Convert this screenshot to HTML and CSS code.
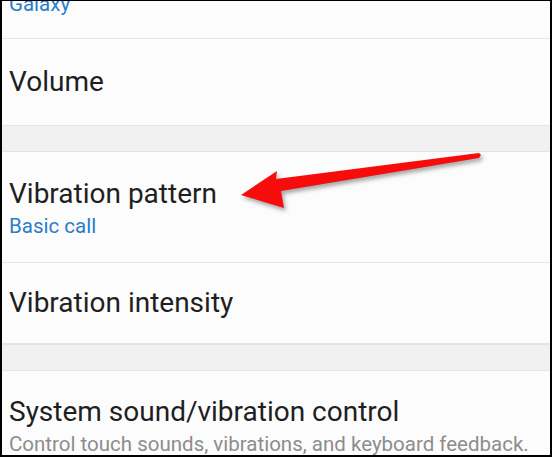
FILE: index.html
```html
<!DOCTYPE html>
<html lang="en">
<head>
<meta charset="utf-8">
<title>Sound settings</title>
<link rel="stylesheet" href="styles.css">
</head>
<body>
<div class="frame">
  <div class="list">
    <div class="item partial">
      <div class="sub blue">Galaxy</div>
    </div>
    <div class="item single tall">
      <div class="title">Volume</div>
    </div>
    <div class="gap"></div>
    <div class="item double">
      <div class="title">Vibration pattern</div>
      <div class="sub blue">Basic call</div>
    </div>
    <div class="item single">
      <div class="title">Vibration intensity</div>
    </div>
    <div class="gap"></div>
    <div class="item double last">
      <div class="title">System sound/vibration control</div>
      <div class="sub grey">Control touch sounds, vibrations, and keyboard feedback.</div>
    </div>
  </div>
</div>
<svg class="arrow" width="552" height="457" viewBox="0 0 552 457" aria-hidden="true">
  <polygon class="arrow-shape" points="241,195 277,171 276,179 479,153 481,155 479,158 281,191 284,208"/>
</svg>
</body>
</html>
```

FILE: styles.css
```css
html, body {
  margin: 0;
  padding: 0;
}

body {
  position: relative;
  width: 552px;
  height: 457px;
  overflow: hidden;
  background: #000;
  font-family: Roboto, "Noto Sans", "Liberation Sans", sans-serif;
}

.frame {
  box-sizing: border-box;
  width: 552px;
  height: 457px;
  border-style: solid;
  border-color: #000;
  border-width: 1px 2px 2px 2px;
  background: #fcfcfc;
  overflow: hidden;
}

.list {
  display: flex;
  flex-direction: column;
}

.item {
  display: flex;
  flex-direction: column;
  padding-left: 7px;
  border-bottom: 1px solid #e4e4e4;
}

.item.partial {
  height: 37px;
  justify-content: flex-start;
  overflow: hidden;
}

.item.partial .sub {
  margin-top: -11px;
}

.item.single {
  justify-content: center;
  height: 80px;
}

.item.single.tall {
  height: 86px;
  border-bottom: none;
}

.item.double {
  padding-top: 26px;
  padding-bottom: 22px;
  height: 62px;
}

.item.double.last {
  border-bottom: none;
  padding-top: 25px;
  padding-bottom: 0;
}

.title {
  font-size: 28px;
  line-height: 32px;
  color: #1f1f1f;
  white-space: nowrap;
}

.sub {
  font-size: 20.5px;
  line-height: 28px;
  margin-top: 2px;
  white-space: nowrap;
}

.blue {
  color: #2a7ccb;
}

.grey {
  color: #8d8d8d;
}

.gap {
  height: 25px;
  background: #f1f1f1;
  border-top: 1px solid #e4e4e4;
  border-bottom: 1px solid #e4e4e4;
}

.arrow {
  position: absolute;
  left: 0;
  top: 0;
  pointer-events: none;
}

.arrow-shape {
  fill: #f70c0c;
  filter: drop-shadow(2px 3px 2px rgba(0, 0, 0, 0.35));
}
```
